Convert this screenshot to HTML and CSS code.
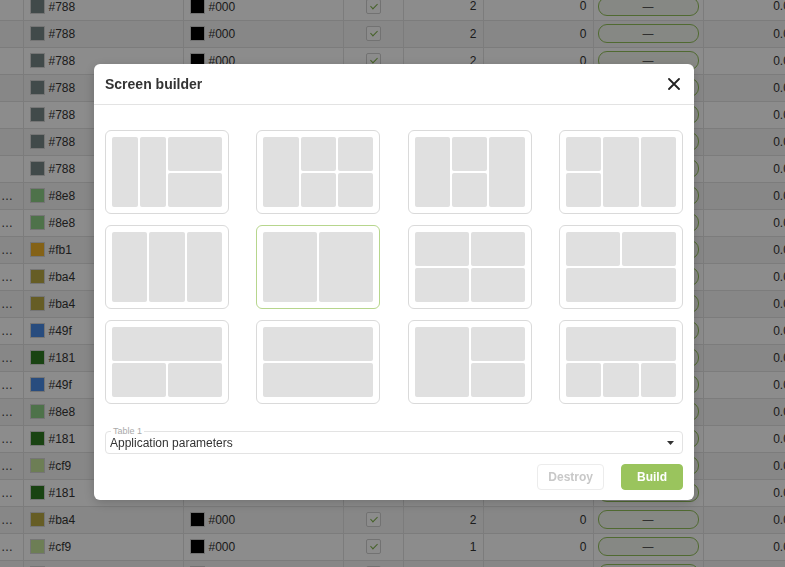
FILE: index.html
```html
<!DOCTYPE html>
<html lang="en">
<head>
  <meta charset="UTF-8" />
  <title>Screen builder</title>
  <link rel="stylesheet" href="styles.css">
</head>
<body>
  <div class="page">
    <table class="grid-table">
      <colgroup>
        <col class="w-dots"><col class="w-color"><col class="w-color"><col class="w-chk">
        <col class="w-num"><col class="w-wide"><col class="w-wide"><col class="w-last">
      </colgroup>
      <tbody>
        <tr><td class="dots"></td><td><span class="sw sw-788"></span>#788</td><td><span class="sw sw-000"></span>#000</td><td class="chk"><span class="box"></span></td><td class="num">2</td><td class="num">0</td><td class="mid"><span class="pill">—</span></td><td class="num">0.00</td></tr>
        <tr><td class="dots"></td><td><span class="sw sw-788"></span>#788</td><td><span class="sw sw-000"></span>#000</td><td class="chk"><span class="box"></span></td><td class="num">2</td><td class="num">0</td><td class="mid"><span class="pill">—</span></td><td class="num">0.00</td></tr>
        <tr><td class="dots"></td><td><span class="sw sw-788"></span>#788</td><td><span class="sw sw-000"></span>#000</td><td class="chk"><span class="box"></span></td><td class="num">2</td><td class="num">0</td><td class="mid"><span class="pill">—</span></td><td class="num">0.00</td></tr>
        <tr><td class="dots"></td><td><span class="sw sw-788"></span>#788</td><td><span class="sw sw-000"></span>#000</td><td class="chk"><span class="box"></span></td><td class="num">2</td><td class="num">0</td><td class="mid"><span class="pill">—</span></td><td class="num">0.00</td></tr>
        <tr><td class="dots"></td><td><span class="sw sw-788"></span>#788</td><td><span class="sw sw-000"></span>#000</td><td class="chk"><span class="box"></span></td><td class="num">2</td><td class="num">0</td><td class="mid"><span class="pill">—</span></td><td class="num">0.00</td></tr>
        <tr><td class="dots"></td><td><span class="sw sw-788"></span>#788</td><td><span class="sw sw-000"></span>#000</td><td class="chk"><span class="box"></span></td><td class="num">2</td><td class="num">0</td><td class="mid"><span class="pill">—</span></td><td class="num">0.00</td></tr>
        <tr><td class="dots"></td><td><span class="sw sw-788"></span>#788</td><td><span class="sw sw-000"></span>#000</td><td class="chk"><span class="box"></span></td><td class="num">2</td><td class="num">0</td><td class="mid"><span class="pill">—</span></td><td class="num">0.00</td></tr>
        <tr><td class="dots">…</td><td><span class="sw sw-8e8"></span>#8e8</td><td><span class="sw sw-000"></span>#000</td><td class="chk"><span class="box"></span></td><td class="num">2</td><td class="num">0</td><td class="mid"><span class="pill">—</span></td><td class="num">0.00</td></tr>
        <tr><td class="dots">…</td><td><span class="sw sw-8e8"></span>#8e8</td><td><span class="sw sw-000"></span>#000</td><td class="chk"><span class="box"></span></td><td class="num">2</td><td class="num">0</td><td class="mid"><span class="pill">—</span></td><td class="num">0.00</td></tr>
        <tr><td class="dots">…</td><td><span class="sw sw-fb1"></span>#fb1</td><td><span class="sw sw-000"></span>#000</td><td class="chk"><span class="box"></span></td><td class="num">2</td><td class="num">0</td><td class="mid"><span class="pill">—</span></td><td class="num">0.00</td></tr>
        <tr><td class="dots">…</td><td><span class="sw sw-ba4"></span>#ba4</td><td><span class="sw sw-000"></span>#000</td><td class="chk"><span class="box"></span></td><td class="num">2</td><td class="num">0</td><td class="mid"><span class="pill">—</span></td><td class="num">0.00</td></tr>
        <tr><td class="dots">…</td><td><span class="sw sw-ba4"></span>#ba4</td><td><span class="sw sw-000"></span>#000</td><td class="chk"><span class="box"></span></td><td class="num">2</td><td class="num">0</td><td class="mid"><span class="pill">—</span></td><td class="num">0.00</td></tr>
        <tr><td class="dots">…</td><td><span class="sw sw-49f"></span>#49f</td><td><span class="sw sw-000"></span>#000</td><td class="chk"><span class="box"></span></td><td class="num">2</td><td class="num">0</td><td class="mid"><span class="pill">—</span></td><td class="num">0.00</td></tr>
        <tr><td class="dots">…</td><td><span class="sw sw-181"></span>#181</td><td><span class="sw sw-000"></span>#000</td><td class="chk"><span class="box"></span></td><td class="num">2</td><td class="num">0</td><td class="mid"><span class="pill">—</span></td><td class="num">0.00</td></tr>
        <tr><td class="dots">…</td><td><span class="sw sw-49f"></span>#49f</td><td><span class="sw sw-000"></span>#000</td><td class="chk"><span class="box"></span></td><td class="num">2</td><td class="num">0</td><td class="mid"><span class="pill">—</span></td><td class="num">0.00</td></tr>
        <tr><td class="dots">…</td><td><span class="sw sw-8e8"></span>#8e8</td><td><span class="sw sw-000"></span>#000</td><td class="chk"><span class="box"></span></td><td class="num">2</td><td class="num">0</td><td class="mid"><span class="pill">—</span></td><td class="num">0.00</td></tr>
        <tr><td class="dots">…</td><td><span class="sw sw-181"></span>#181</td><td><span class="sw sw-000"></span>#000</td><td class="chk"><span class="box"></span></td><td class="num">2</td><td class="num">0</td><td class="mid"><span class="pill">—</span></td><td class="num">0.00</td></tr>
        <tr><td class="dots">…</td><td><span class="sw sw-cf9"></span>#cf9</td><td><span class="sw sw-000"></span>#000</td><td class="chk"><span class="box"></span></td><td class="num">2</td><td class="num">0</td><td class="mid"><span class="pill">—</span></td><td class="num">0.00</td></tr>
        <tr><td class="dots">…</td><td><span class="sw sw-181"></span>#181</td><td><span class="sw sw-000"></span>#000</td><td class="chk"><span class="box"></span></td><td class="num">2</td><td class="num">0</td><td class="mid"><span class="pill">—</span></td><td class="num">0.00</td></tr>
        <tr><td class="dots">…</td><td><span class="sw sw-ba4"></span>#ba4</td><td><span class="sw sw-000"></span>#000</td><td class="chk"><span class="box"></span></td><td class="num">2</td><td class="num">0</td><td class="mid"><span class="pill">—</span></td><td class="num">0.00</td></tr>
        <tr><td class="dots">…</td><td><span class="sw sw-cf9"></span>#cf9</td><td><span class="sw sw-000"></span>#000</td><td class="chk"><span class="box"></span></td><td class="num">1</td><td class="num">0</td><td class="mid"><span class="pill">—</span></td><td class="num">0.00</td></tr>
        <tr><td class="dots">…</td><td><span class="sw sw-8e8"></span>#8e8</td><td><span class="sw sw-000"></span>#000</td><td class="chk"><span class="box"></span></td><td class="num">2</td><td class="num">0</td><td class="mid"><span class="pill">—</span></td><td class="num">0.00</td></tr>
      </tbody>
    </table>
  </div>

  <div class="overlay">
    <div class="modal">
      <div class="modal-header">
        <span class="modal-title">Screen builder</span>
        <button class="close-btn" aria-label="Close">
          <svg width="12" height="12" viewBox="0 0 12 12"><path d="M1 1 L11 11 M11 1 L1 11" stroke="#222" stroke-width="1.8" stroke-linecap="round"/></svg>
        </button>
      </div>

      <div class="modal-body">
        <div class="layouts">
          <div class="tile"><div class="plan cols-4"><i class="r2"></i><i class="r2"></i><i class="c2"></i><i class="c2"></i></div></div>
          <div class="tile"><div class="plan cols-3"><i class="r2"></i><i></i><i></i><i></i><i></i></div></div>
          <div class="tile"><div class="plan cols-3"><i class="r2"></i><i></i><i class="r2"></i><i></i></div></div>
          <div class="tile"><div class="plan cols-3"><i></i><i class="r2"></i><i class="r2"></i><i></i></div></div>

          <div class="tile"><div class="plan cols-3"><i></i><i></i><i></i></div></div>
          <div class="tile selected"><div class="plan cols-2"><i></i><i></i></div></div>
          <div class="tile"><div class="plan cols-2 rows-2"><i></i><i></i><i></i><i></i></div></div>
          <div class="tile"><div class="plan cols-2"><i></i><i></i><i class="c2"></i></div></div>

          <div class="tile"><div class="plan cols-2"><i class="c2"></i><i></i><i></i></div></div>
          <div class="tile"><div class="plan cols-1 rows-2"><i></i><i></i></div></div>
          <div class="tile"><div class="plan cols-2"><i class="r2"></i><i></i><i></i></div></div>
          <div class="tile"><div class="plan cols-3"><i class="c3"></i><i></i><i></i><i></i></div></div>
        </div>

        <div class="field">
          <span class="field-label">Table 1</span>
          <span class="field-value">Application parameters</span>
          <svg class="caret" width="7" height="4" viewBox="0 0 7 4"><path d="M0 0 H7 L3.5 4 Z" fill="#333"/></svg>
        </div>

        <div class="actions">
          <button class="btn btn-ghost" disabled>Destroy</button>
          <button class="btn btn-primary">Build</button>
        </div>
      </div>
    </div>
  </div>
</body>
</html>
```

FILE: styles.css
```css
html, body {
  margin: 0;
  padding: 0;
  height: 100%;
  overflow: hidden;
  font-family: 'Liberation Sans', Arial, sans-serif;
  background-color: #ffffff;
  color: #333;
}

/* background table */
.page {
  margin-top: -7px;
}

.grid-table {
  border-collapse: collapse;
  table-layout: fixed;
  width: 803px;
  font-size: 12px;
}

.w-dots { width: 23px; }
.w-color { width: 160px; }
.w-chk { width: 60px; }
.w-num { width: 80px; }
.w-wide { width: 110px; }
.w-last { width: 100px; }

.grid-table tr {
  height: 27px;
}

.grid-table tr:nth-child(even) {
  background-color: #f6f6f6;
}

.grid-table td {
  padding: 0 6px;
  border-right: 1px solid #e2e2e2;
  border-bottom: 1px solid #e2e2e2;
  white-space: nowrap;
  overflow: hidden;
  vertical-align: middle;
}

.grid-table td.dots {
  padding: 0 0 0 1px;
}

.sw {
  display: inline-block;
  width: 13px;
  height: 13px;
  border: 1px solid #d6d6d6;
  margin-right: 4px;
  vertical-align: -3px;
}

.sw-788 { background-color: #778888; }
.sw-8e8 { background-color: #8ecf88; }
.sw-fb1 { background-color: #f0b32a; }
.sw-ba4 { background-color: #bbaa44; }
.sw-49f { background-color: #4a8ae6; }
.sw-181 { background-color: #2f7a22; }
.sw-cf9 { background-color: #c6e69c; }
.sw-000 { background-color: #000000; border-color: #cfcfcf; }

.chk {
  text-align: center;
}

.box {
  display: inline-block;
  position: relative;
  width: 13px;
  height: 13px;
  border: 1px solid #d0d0d0;
  border-radius: 2px;
  background-color: #fff;
  vertical-align: middle;
}

.box::after {
  content: "";
  position: absolute;
  left: 5px;
  top: 2px;
  width: 3px;
  height: 6px;
  border-right: 1.5px solid #7fb24a;
  border-bottom: 1.5px solid #7fb24a;
  transform: rotate(45deg);
}

.num {
  text-align: right;
}

.grid-table td.mid {
  padding: 0 4px;
  text-align: center;
}

.pill {
  display: block;
  height: 17px;
  line-height: 17px;
  border: 1px solid #93c25a;
  border-radius: 9px;
  background-color: #f5f7f1;
  font-size: 11px;
}

/* modal */
.overlay {
  position: fixed;
  top: 0;
  left: 0;
  right: 0;
  bottom: 0;
  background-color: rgba(0, 0, 0, 0.45);
  display: flex;
  justify-content: center;
  align-items: flex-start;
  padding: 64px 0 0 3px;
}

.modal {
  width: 600px;
  background-color: #fff;
  border-radius: 6px;
  box-shadow: 0 3px 12px rgba(0, 0, 0, 0.2);
}

.modal-header {
  height: 40px;
  display: flex;
  align-items: center;
  justify-content: space-between;
  padding: 0 11px;
  border-bottom: 1px solid #e3e3e3;
}

.modal-title {
  font-size: 14px;
  font-weight: bold;
  color: #333;
}

.close-btn {
  width: 18px;
  height: 18px;
  padding: 0;
  border: none;
  background: none;
  display: flex;
  align-items: center;
  justify-content: center;
  cursor: pointer;
}

.modal-body {
  padding: 25px 11px 10px;
}

.layouts {
  display: grid;
  grid-template-columns: repeat(4, 124px);
  justify-content: space-between;
  row-gap: 11px;
}

.tile {
  box-sizing: border-box;
  height: 84px;
  padding: 6px;
  border: 1px solid #dadada;
  border-radius: 6px;
  cursor: pointer;
}

.tile.selected {
  border-color: #b7d68d;
}

.plan {
  display: grid;
  height: 70px;
  gap: 2px;
  grid-auto-rows: 1fr;
}

.cols-1 { grid-template-columns: 1fr; }
.cols-2 { grid-template-columns: repeat(2, 1fr); }
.cols-3 { grid-template-columns: repeat(3, 1fr); }
.cols-4 { grid-template-columns: repeat(4, 1fr); }
.rows-2 { grid-template-rows: 1fr 1fr; }

.plan i {
  display: block;
  background-color: #e0e0e0;
  border-radius: 2px;
}

.plan i.r2 { grid-row: span 2; }
.plan i.c2 { grid-column: span 2; }
.plan i.c3 { grid-column: span 3; }

.field {
  position: relative;
  box-sizing: border-box;
  height: 23px;
  margin-top: 27px;
  border: 1px solid #e3e3e3;
  border-radius: 4px;
  display: flex;
  align-items: center;
  justify-content: space-between;
  padding: 0 8px 0 4px;
}

.field-label {
  position: absolute;
  top: -7px;
  left: 5px;
  padding: 0 2px;
  background-color: #fff;
  font-size: 9px;
  line-height: 12px;
  color: #aaa;
}

.field-value {
  font-size: 12px;
  color: #333;
  padding-top: 1px;
}

.actions {
  display: flex;
  justify-content: flex-end;
  gap: 17px;
  margin-top: 10px;
}

.btn {
  height: 26px;
  border-radius: 4px;
  font-family: inherit;
  font-size: 12px;
  font-weight: bold;
  cursor: pointer;
}

.btn-ghost {
  padding: 0 10px;
  background-color: #fff;
  border: 1px solid #ececec;
  color: #c8c8c8;
  cursor: default;
}

.btn-primary {
  padding: 0 15px;
  background-color: #9ac45d;
  border: 1px solid #9ac45d;
  color: #fff;
}
```
